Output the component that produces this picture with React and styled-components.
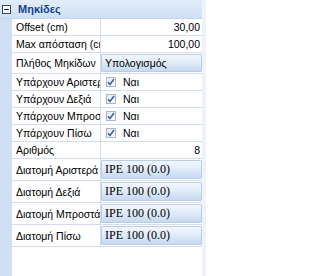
import React from "react";
import styled, { createGlobalStyle } from "styled-components";

const Global = createGlobalStyle`
  html, body { margin: 0; padding: 0; background: #ffffff; }
  body { font-family: "Liberation Sans", Arial, sans-serif; }
`;

const GUTTER = "#d0dff4";
const LINE = "#d5dcea";

const Panel = styled.div`
  width: 206px;
  height: 276px;
  box-sizing: border-box;
  overflow: hidden;
  display: flex;
  flex-direction: column;
  background: linear-gradient(to right, ${GUTTER} 0, ${GUTTER} 12px, #ffffff 12px);
  border-right: 4px solid #eef3fa;
`;

const Header = styled.div`
  height: 19px;
  flex: none;
  display: flex;
  align-items: center;
  box-sizing: border-box;
  border-bottom: 1px solid #c3d4ec;
  background: linear-gradient(to bottom, #e3edf9, #cfdff4);
`;

const Toggle = styled.span`
  width: 7px;
  height: 7px;
  margin-left: 2px;
  border: 1px solid #3b4a60;
  background: #fff;
  position: relative;
  flex: none;
  &::after {
    content: "";
    position: absolute;
    left: 1px;
    right: 1px;
    top: 3px;
    height: 1px;
    background: #1e2a3c;
  }
`;

const Title = styled.span`
  margin-left: 7px;
  font-weight: bold;
  font-size: 11px;
  color: #15428b;
`;

const Row = styled.div`
  height: ${(p) => p.$h}px;
  flex: none;
  display: grid;
  grid-template-columns: 12px 89px 1fr;
  box-sizing: border-box;
`;

const Gap = styled.div``;

const Label = styled.div`
  display: flex;
  align-items: center;
  padding-left: 4px;
  font-size: 10.5px;
  color: #000;
  white-space: nowrap;
  overflow: hidden;
  border-bottom: 1px solid ${LINE};
  border-right: 1px solid ${LINE};
  box-sizing: border-box;
`;

const Value = styled.div`
  display: flex;
  align-items: center;
  justify-content: ${(p) => (p.$right ? "flex-end" : "flex-start")};
  padding: ${(p) => (p.$button ? "0" : "0 2px 0 4px")};
  font-size: 10.5px;
  color: #000;
  white-space: nowrap;
  overflow: hidden;
  border-bottom: 1px solid ${LINE};
  box-sizing: border-box;
`;

const Button = styled.div`
  flex: 1;
  align-self: stretch;
  display: flex;
  align-items: center;
  padding-left: 3px;
  margin: 1px 0 1px 0;
  border: 1px solid #b9cce8;
  border-radius: 1px;
  background: linear-gradient(to bottom, #f3f7fd 0%, #e2ecf9 45%, #c6d9f2 100%);
  font-family: ${(p) => (p.$serif ? '"Liberation Serif", "Times New Roman", serif' : '"Liberation Sans", Arial, sans-serif')};
  font-size: ${(p) => (p.$serif ? "12px" : "10.5px")};
  color: #000;
`;

const Check = styled.span`
  width: 10px;
  height: 10px;
  box-sizing: border-box;
  border: 1px solid #aab7c9;
  background: linear-gradient(to bottom right, #e4e9f0, #ffffff);
  margin: 0 7px 0 1px;
  display: inline-flex;
  align-items: center;
  justify-content: center;
`;

const CheckMark = () => (
  <svg width="8" height="8" viewBox="0 0 8 8">
    <path d="M1 4.2 L3 6.5 L7 1" fill="none" stroke="#3c5fb0" strokeWidth="1.6" />
  </svg>
);

const TextRow = ({ label, value }) => (
  <Row $h={17}>
    <Gap />
    <Label>{label}</Label>
    <Value $right>{value}</Value>
  </Row>
);

const CheckRow = ({ label }) => (
  <Row $h={17}>
    <Gap />
    <Label>{label}</Label>
    <Value>
      <Check>
        <CheckMark />
      </Check>
      Ναι
    </Value>
  </Row>
);

const ButtonRow = ({ label, value, serif, h }) => (
  <Row $h={h}>
    <Gap />
    <Label>{label}</Label>
    <Value $button>
      <Button $serif={serif}>{value}</Button>
    </Value>
  </Row>
);

export default function App() {
  return (
    <>
      <Global />
      <Panel>
        <Header>
          <Toggle />
          <Title>Μηκίδες</Title>
        </Header>
        <TextRow label="Offset (cm)" value="30,00" />
        <TextRow label="Max απόσταση (cm)" value="100,00" />
        <ButtonRow label="Πλήθος Μηκίδων" value="Υπολογισμός" h={21} />
        <CheckRow label="Υπάρχουν Αριστερά" />
        <CheckRow label="Υπάρχουν Δεξιά" />
        <CheckRow label="Υπάρχουν Μπροστά" />
        <CheckRow label="Υπάρχουν Πίσω" />
        <TextRow label="Αριθμός" value="8" />
        <ButtonRow label="Διατομή Αριστερά" value="IPE 100 (0.0)" serif h={22} />
        <ButtonRow label="Διατομή Δεξιά" value="IPE 100 (0.0)" serif h={22} />
        <ButtonRow label="Διατομή Μπροστά" value="IPE 100 (0.0)" serif h={22} />
        <ButtonRow label="Διατομή Πίσω" value="IPE 100 (0.0)" serif h={22} />
      </Panel>
    </>
  );
}
